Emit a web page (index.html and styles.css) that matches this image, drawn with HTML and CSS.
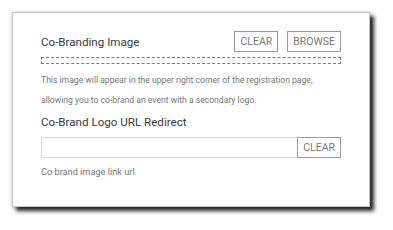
FILE: index.html
```html
<!DOCTYPE html>
<html>
<head>
<meta charset="utf-8">
<link rel="stylesheet" href="styles.css">
</head>
<body>
<div class="card">
  <div class="head">
    <div class="title">Co-Branding Image</div>
    <div class="btns">
      <button class="btn">CLEAR</button>
      <button class="btn">BROWSE</button>
    </div>
  </div>
  <div class="drop"></div>
  <p class="desc">This image will appear in the upper right corner of the registration page,<br>allowing you to co-brand an event with a secondary logo.</p>
  <div class="title label">Co-Brand Logo URL Redirect</div>
  <div class="inrow">
    <input class="input" type="text">
    <button class="btn">CLEAR</button>
  </div>
  <div class="hint">Co brand image link url</div>
</div>
</body>
</html>
```

FILE: styles.css
```css
html, body {
  margin: 0;
  padding: 0;
  background: #fff;
}
body {
  padding: 12px;
  font-family: Roboto, "Liberation Sans", sans-serif;
}
.card {
  box-sizing: border-box;
  width: 358px;
  height: 195px;
  border: 1px solid #c8c8c8;
  background: #fff;
  padding: 18px 28px 0 28px;
  box-shadow: 4px 4px 4px rgba(0,0,0,0.85), 0 0 3px rgba(0,0,0,0.25);
}
.head {
  display: flex;
  justify-content: space-between;
  align-items: center;
  height: 21px;
}
.title {
  font-size: 11.6px;
  color: #3a3a3a;
  line-height: 16px;
}
.btns {
  display: flex;
  gap: 9px;
}
.btn {
  box-sizing: border-box;
  height: 21px;
  padding: 0 5px;
  border: 1px solid #9a9a9a;
  background: #fff;
  color: #7a7a7a;
  font-family: Roboto, "Liberation Sans", sans-serif;
  font-size: 10.5px;
  line-height: 19px;
}
.drop {
  margin-top: 5px;
  height: 7px;
  box-sizing: border-box;
  border: 1px dashed #6e7e94;
}
.desc {
  margin: 6px 0 0 0;
  font-size: 8.6px;
  line-height: 20px;
  color: #777;
  white-space: nowrap;
}
.label {
  margin-top: 4px;
}
.inrow {
  display: flex;
  margin-top: 7px;
  height: 21px;
}
.input {
  flex: 1;
  box-sizing: border-box;
  height: 21px;
  margin: 0;
  border: 1px solid #ddd;
  border-right: none;
  outline: none;
}
.hint {
  margin-top: 7px;
  font-size: 9.2px;
  line-height: 14px;
  color: #777;
}
```
